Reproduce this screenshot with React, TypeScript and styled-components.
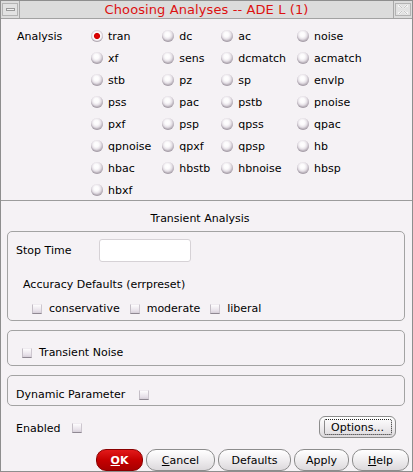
import React from "react";
import styled, { createGlobalStyle, css } from "styled-components";

const Global = createGlobalStyle`
  html, body { margin: 0; padding: 0; background: #f5f2f5; }
  body { font-family: "DejaVu Sans", "Liberation Sans", sans-serif; font-size: 11px; color: #000; }
  * { box-sizing: border-box; }
`;

const Window = styled.div`
  width: 413px;
  height: 472px;
  border: 1px solid #8e8e8e;
  background: #f5f2f5;
  display: flex;
  flex-direction: column;
  overflow: hidden;
`;

const TitleBar = styled.div`
  height: 18px;
  flex: none;
  background: #dcdcdc;
  border-bottom: 1px solid #a2a2a2;
  display: flex;
  align-items: stretch;
`;

const TitleButton = styled.div<{ $side: "left" | "right" }>`
  width: 19px;
  display: flex;
  align-items: center;
  justify-content: center;
  ${(p) =>
    p.$side === "left"
      ? css`border-right: 1px solid #a8a8a8;`
      : css`border-left: 1px solid #a8a8a8;`}
`;

const ButtonFace = styled.div`
  width: 16px;
  height: 13px;
  border: 1px solid #b4b4b4;
  background: #e2e2e2;
  display: flex;
  align-items: center;
  justify-content: center;
`;

const MinBar = styled.div`
  width: 9px;
  height: 3px;
  border: 1px solid #9a9a9a;
  background: #f0f0f0;
`;

const TitleText = styled.div`
  flex: 1;
  text-align: center;
  color: #dd1111;
  font-size: 13px;
  line-height: 17px;
  letter-spacing: 0.1px;
`;

const AnalysisSection = styled.div`
  display: grid;
  grid-template-columns: 74px auto;
  padding: 6px 0 0 16px;
  height: 181px;
  flex: none;
`;

const SectionLabel = styled.div`
  line-height: 22px;
  height: 22px;
  padding-top: 1px;
`;

const RadioGrid = styled.div`
  display: grid;
  grid-template-columns: repeat(4, auto);
  grid-auto-rows: 22px;
  column-gap: 11px;
  justify-content: start;
`;

const RadioItem = styled.label`
  display: flex;
  align-items: center;
  gap: 5px;
  white-space: nowrap;
`;

const RadioDot = styled.span<{ $on?: boolean }>`
  width: 12px;
  height: 12px;
  border-radius: 50%;
  flex: none;
  background: ${(p) =>
    p.$on
      ? "radial-gradient(circle at 50% 50%, #e80000 0, #d00000 2.6px, #ffffff 3.6px, #f2eef2 4.5px, #cfc8d0 6px)"
      : "radial-gradient(circle at 45% 38%, #ffffff 0, #fbfafb 2.5px, #e6e1e7 4.5px, #c9c2ca 6px)"};
  box-shadow: inset 0 -1px 1px rgba(120, 110, 125, 0.45);
`;

const Separator = styled.div`
  height: 1px;
  flex: none;
  background: #9c9c9c;
`;

const TransientArea = styled.div`
  padding: 0 6px 0 6px;
  display: flex;
  flex-direction: column;
`;

const Heading = styled.div`
  text-align: center;
  line-height: 16px;
  margin: 10px 0 4px 0;
  padding-right: 13px;
`;

const GroupBox = styled.div<{ $pt: number; $pb: number; $pl: number; $mt?: number }>`
  border: 1px solid #a3a3a3;
  border-radius: 5px;
  padding: ${(p) => `${p.$pt}px 0 ${p.$pb}px ${p.$pl}px`};
  margin-top: ${(p) => p.$mt ?? 0}px;
  width: 398px;
`;

const FieldRow = styled.div`
  display: flex;
  align-items: center;
  height: 23px;
`;

const FieldLabel = styled.div`
  width: 83px;
`;

const TextInput = styled.div`
  width: 92px;
  height: 23px;
  background: #ffffff;
  border: 1px solid #d6d2d6;
  border-radius: 3px;
`;

const Line = styled.div<{ $mt: number; $ml?: number }>`
  line-height: 16px;
  height: 16px;
  margin-top: ${(p) => p.$mt}px;
  margin-left: ${(p) => p.$ml ?? 0}px;
  display: flex;
  align-items: center;
`;

const CheckRow = styled.div`
  display: flex;
  align-items: center;
  gap: 10px;
  line-height: 16px;
  height: 16px;
  margin: 8px 0 0 16px;
`;

const CheckItem = styled.label<{ $gap?: number }>`
  display: flex;
  align-items: center;
  gap: ${(p) => p.$gap ?? 7}px;
`;

const Box = styled.span`
  width: 10px;
  height: 10px;
  flex: none;
  background: linear-gradient(#fdfcfd, #e7e1e9 70%, #d6cfd8);
  border-top: 1px solid #efebf0;
  border-left: 1px solid #c4bec6;
  border-right: 1px solid #cdc7cf;
  border-bottom: 1px solid #8f8892;
`;

const BottomRow = styled.div`
  display: flex;
  align-items: center;
  justify-content: space-between;
  padding: 0 16px 0 15px;
  margin-top: 10px;
  height: 22px;
  flex: none;
`;

const EnabledLabel = styled(CheckItem)`
  margin-top: 2px;
`;

const PushButton = styled.button<{ $w: number; $primary?: boolean; $r?: number }>`
  font-family: inherit;
  font-size: 11px;
  height: 22px;
  width: ${(p) => p.$w}px;
  border-radius: ${(p) => p.$r ?? 10}px;
  border: 1px solid #8c8c8c;
  background: linear-gradient(#ffffff, #f1eff1 45%, #dcd9dc);
  color: #000;
  padding: 0;
  display: flex;
  align-items: center;
  justify-content: center;
  ${(p) =>
    p.$primary &&
    css`
      background: linear-gradient(#e21a1a, #c50000 50%, #a80000);
      border-color: #8a0000;
      color: #fff;
      font-weight: bold;
    `}
`;

const FocusRing = styled.span`
  border: 1px dotted #222;
  border-radius: 2px;
  width: 68px;
  height: 16px;
  display: flex;
  align-items: center;
  justify-content: center;
`;

const ButtonBar = styled.div`
  display: flex;
  justify-content: flex-end;
  gap: 3px;
  padding-right: 3px;
  margin-top: 11px;
  flex: none;
`;

const U = styled.span`
  text-decoration: underline;
`;

const radios: string[][] = [
  ["tran", "dc", "ac", "noise"],
  ["xf", "sens", "dcmatch", "acmatch"],
  ["stb", "pz", "sp", "envlp"],
  ["pss", "pac", "pstb", "pnoise"],
  ["pxf", "psp", "qpss", "qpac"],
  ["qpnoise", "qpxf", "qpsp", "hb"],
  ["hbac", "hbstb", "hbnoise", "hbsp"],
  ["hbxf"],
];

export default function App() {
  return (
    <>
      <Global />
      <Window>
        <TitleBar>
          <TitleButton $side="left">
            <ButtonFace>
              <MinBar />
            </ButtonFace>
          </TitleButton>
          <TitleText>Choosing Analyses -- ADE L (1)</TitleText>
          <TitleButton $side="right">
            <ButtonFace>
              <svg width="12" height="11" viewBox="0 0 12 11">
                <path
                  d="M2 1 L5 4 M7 4 L10 1 M2 10 L5 7 M7 7 L10 10 M1 2 L3 2 M9 2 L11 2 M1 9 L3 9 M9 9 L11 9"
                  stroke="#fafafa"
                  strokeWidth="1.6"
                  fill="none"
                />
                <path
                  d="M2 1 L5 4 M7 4 L10 1 M2 10 L5 7 M7 7 L10 10"
                  stroke="#b8b8b8"
                  strokeWidth="0.8"
                  fill="none"
                />
              </svg>
            </ButtonFace>
          </TitleButton>
        </TitleBar>

        <AnalysisSection>
          <SectionLabel>Analysis</SectionLabel>
          <RadioGrid>
            {radios.flat().map((r) => (
              <RadioItem key={r}>
                <RadioDot $on={r === "tran"} />
                {r}
              </RadioItem>
            ))}
          </RadioGrid>
        </AnalysisSection>

        <Separator />

        <TransientArea>
          <Heading>Transient Analysis</Heading>
          <GroupBox $pt={7} $pb={3} $pl={8}>
            <FieldRow>
              <FieldLabel>Stop Time</FieldLabel>
              <TextInput />
            </FieldRow>
            <Line $mt={15} $ml={7}>Accuracy Defaults (errpreset)</Line>
            <CheckRow>
              <CheckItem>
                <Box />
                conservative
              </CheckItem>
              <CheckItem>
                <Box />
                moderate
              </CheckItem>
              <CheckItem>
                <Box />
                liberal
              </CheckItem>
            </CheckRow>
          </GroupBox>

          <GroupBox $pt={14} $pb={4} $pl={14} $mt={9}>
            <Line $mt={0}>
              <CheckItem $gap={7}>
                <Box />
                Transient Noise
              </CheckItem>
            </Line>
          </GroupBox>

          <GroupBox $pt={11} $pb={2} $pl={8} $mt={9}>
            <Line $mt={0}>
              <CheckItem $gap={14}>
                Dynamic Parameter
                <Box />
              </CheckItem>
            </Line>
          </GroupBox>
        </TransientArea>

        <BottomRow>
          <EnabledLabel $gap={12}>
            Enabled
            <Box />
          </EnabledLabel>
          <PushButton $w={77} $r={6}>
            <FocusRing>Options...</FocusRing>
          </PushButton>
        </BottomRow>

        <ButtonBar>
          <PushButton $w={47} $primary>
            <U>O</U>K
          </PushButton>
          <PushButton $w={69}>
            <U>C</U>ancel
          </PushButton>
          <PushButton $w={73}>Defaults</PushButton>
          <PushButton $w={55}>Apply</PushButton>
          <PushButton $w={57}>
            <U>H</U>elp
          </PushButton>
        </ButtonBar>
      </Window>
    </>
  );
}
